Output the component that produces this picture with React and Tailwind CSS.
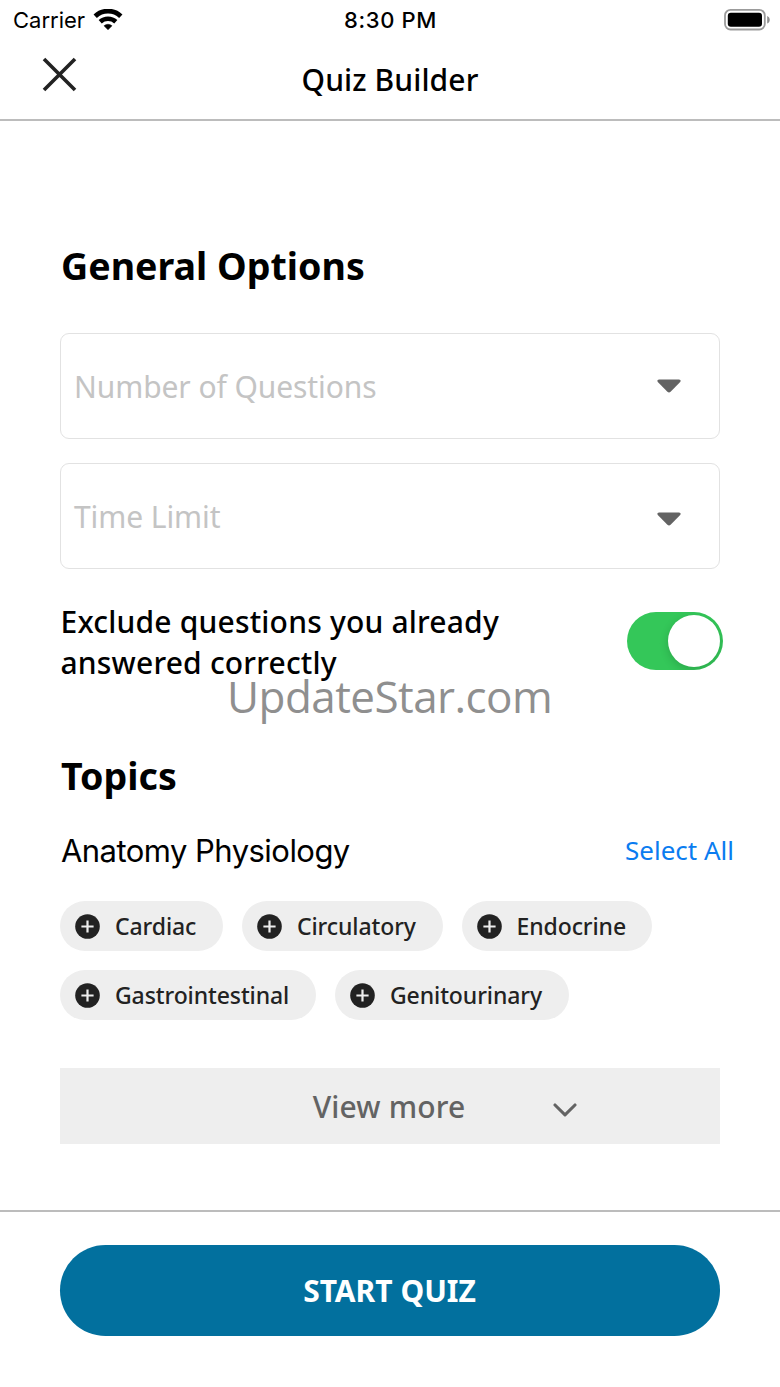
import React from "react";

const noto = "font-['Noto_Sans',sans-serif]";
const inter = "font-[Inter,sans-serif]";

function WifiIcon() {
  return (
    <svg width="30" height="22" viewBox="0 0 30 22" fill="none" stroke="#000">
      <path d="M2.2 7.2A18.6 18.6 0 0 1 27.8 7.2" strokeWidth="4.8" />
      <path d="M7.2 12.7A11.6 11.6 0 0 1 22.8 12.7" strokeWidth="4.6" />
      <path d="M15 20.8L11 16.8A6 6 0 0 1 19 16.8Z" fill="#000" strokeWidth="0.5" />
    </svg>
  );
}

function BatteryIcon() {
  return (
    <svg width="47" height="23" viewBox="0 0 47 23">
      <rect x="1" y="0.9" width="39.8" height="19.6" rx="5.5" fill="#fff" stroke="#9b9b9b" strokeWidth="1.8" />
      <rect x="3.8" y="3.7" width="34.2" height="14" rx="3" fill="#000" />
      <path d="M43.2 6.9C46.6 8.3 46.6 13.1 43.2 14.5Z" fill="#8e8e8e" />
    </svg>
  );
}

function PlusIcon() {
  return (
    <svg width="25" height="25" viewBox="0 0 25 25" className="shrink-0">
      <circle cx="12.5" cy="12.5" r="12.3" fill="#222" />
      <path d="M12.5 6.4V18.6M6.4 12.5H18.6" stroke="#eee" strokeWidth="2.2" />
    </svg>
  );
}

function SelectField({ label, caret }) {
  return (
    <div className="flex h-[106px] w-[660px] items-center justify-between rounded-[9px] border border-[#e2e2e2] pr-[38px] pl-[13px]">
      <span className="pt-[2px] text-[30px] leading-[42px] tracking-[-0.08px] text-[#c4c4c4]">{label}</span>
      <svg width="24" height="14" viewBox="0 0 24 14" className={caret}>
        <path d="M2 0.5H22Q24.6 0.8 23.2 3L13.6 12.8Q12 14.2 10.4 12.8L0.8 3Q-0.6 0.8 2 0.5Z" fill="#636363" />
      </svg>
    </div>
  );
}

function Chip({ label, size }) {
  return (
    <button className={`flex h-[50px] items-center gap-[15px] rounded-full bg-[#eee] pl-[15px] text-[23px] leading-[32px] font-medium tracking-[-0.1px] text-[#222] ${size}`}>
      <PlusIcon />
      <span className="whitespace-nowrap">{label}</span>
    </button>
  );
}

export default function App() {
  return (
    <div className={`relative flex h-[1387px] w-[780px] flex-col overflow-hidden bg-white text-black ${noto}`}>
      <div className={`grid h-10 grid-cols-3 items-center pr-[9px] pl-[13px] text-[22px] leading-10 ${inter}`}>
        <div className="flex items-center gap-2">
          <span>Carrier</span>
          <WifiIcon />
        </div>
        <span className="pr-[3px] text-center font-medium tracking-[0.6px]">8:30 PM</span>
        <div className="flex justify-end"><BatteryIcon /></div>
      </div>

      <header className="grid h-[81px] grid-cols-[60px_1fr_60px] border-b-2 border-[#bcbcbc] px-[42px]">
        <svg width="35" height="35" viewBox="0 0 35 35" className="mt-[17px]">
          <path d="M2 2L33 33M33 2L2 33" stroke="#222" strokeWidth="3.6" />
        </svg>
        <h1 className="pt-[19px] text-center text-[30px] leading-[42px] font-medium tracking-[0.1px]">Quiz Builder</h1>
      </header>

      <main className="flex h-[1089px] flex-col pl-[60px]">
        <h2 className="mt-[120px] ml-[1px] h-[50px] text-[37.6px] leading-[50px] font-bold">General Options</h2>
        <div className="mt-[42px] flex flex-col gap-6">
          <SelectField label="Number of Questions" caret="mb-[1px]" />
          <SelectField label="Time Limit" caret="mt-[6px]" />
        </div>
        <div className="mt-[32px] flex w-[663px] justify-between">
          <p className="ml-[0.5px] text-[30px] leading-[41px] font-medium tracking-[0.19px]">
            Exclude questions you already
            <br />
            answered correctly
          </p>
          <div className="mt-[11px] flex h-[58px] w-[96px] items-center justify-end overflow-hidden rounded-full bg-[#34c759] pr-[3px]">
            <div className="size-[52px] rounded-full bg-white shadow-[0_3px_10px_rgba(0,0,0,0.16)]" />
          </div>
        </div>
        <h2 className="mt-[68px] ml-[1px] h-[50px] text-[37.6px] leading-[50px] font-bold">Topics</h2>
        <div className="mt-[29px] flex h-[42px] w-[674px] items-center justify-between">
          <h3 className={`ml-[1px] text-[31px] leading-[42px] tracking-[-0.54px] ${inter}`}>Anatomy Physiology</h3>
          <button className="pb-[2px] text-[26px] leading-[42px] text-[#0a7cf0]">Select All</button>
        </div>
        <div className="mt-[29px] flex flex-col gap-[19px]">
          <div className="flex gap-[19px]">
            <Chip label="Cardiac" size="w-[163px]" />
            <Chip label="Circulatory" size="w-[200.5px]" />
            <Chip label="Endocrine" size="w-[190.5px]" />
          </div>
          <div className="flex gap-[19px]">
            <Chip label="Gastrointestinal" size="w-[256px]" />
            <Chip label="Genitourinary" size="w-[234px]" />
          </div>
        </div>
        <button className="mt-[48px] grid h-[76px] w-[660px] grid-cols-[240px_180px_240px] items-center bg-[#eee] text-[30px] leading-[42px] font-medium text-[#636363]">
          <span className="col-start-2 pt-[2px] pr-[2px] text-center tracking-[0.15px]">View more</span>
          <svg width="24" height="15" viewBox="0 0 24 15" className="mt-[8px] ml-[73px]">
            <path d="M2 2L12 11.8L22 2" fill="none" stroke="#636363" strokeWidth="3.1" strokeLinecap="round" strokeLinejoin="round" />
          </svg>
        </button>
      </main>

      <footer className="flex h-[177px] flex-col items-center border-t-2 border-[#bcbcbc] pt-[33px]">
        <button className="h-[91px] w-[660px] rounded-full bg-[#02709e] pr-[1px] text-[30px] leading-[92px] font-bold text-white">START QUIZ</button>
      </footer>

      <div className="pointer-events-none absolute top-[666px] left-[227px] text-[44px] leading-[60px] tracking-[-0.55px] whitespace-nowrap text-[#8f8f8f] font-['Open_Sans',sans-serif]">
        UpdateStar.com
      </div>
    </div>
  );
}
